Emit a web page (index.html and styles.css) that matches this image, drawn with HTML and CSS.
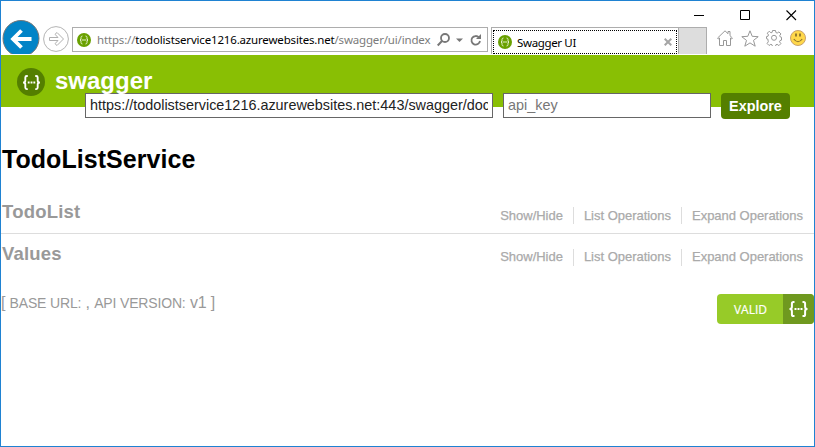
FILE: index.html
```html
<!DOCTYPE html>
<html lang="en">
<head>
<meta charset="utf-8">
<title>Swagger UI</title>
<link rel="stylesheet" href="styles.css">
</head>
<body>
<svg class="defs" width="0" height="0">
  <symbol id="braces" viewBox="0 0 20 16">
    <path d="M6 1H5Q3.400 1 3.400 2.600V6Q3.400 8 1 8Q3.400 8 3.400 10V13.400Q3.400 15 5 15H6M14 1H15Q16.600 1 16.600 2.600V6Q16.600 8 19 8Q16.600 8 16.600 10V13.400Q16.600 15 15 15H14" fill="none" stroke="currentColor" stroke-width="2"/>
    <path d="M6 7h2v2H6zM9 7h2v2H9zM12 7h2v2h-2z" fill="currentColor"/>
  </symbol>
  <symbol id="favicon" viewBox="0 0 14 14">
    <circle cx="7" cy="7" r="7" fill="#69a000"/>
    <path d="M5.500 3Q4 3 4 4.500V6L3 7l1 1v1.500Q4 11 5.500 11M8.500 3Q10 3 10 4.500V6l1 1-1 1v1.500Q10 11 8.500 11M4.500 7h5" fill="none" stroke="#e2efc8" stroke-width="1"/>
  </symbol>
</svg>
<div class="window">
  <div class="titlebar">
    <svg width="11" height="11"><path d="M0 5.500h10" stroke="#000"/></svg>
    <svg width="11" height="11"><path d="M.5 .5h9v9h-9z" fill="none" stroke="#000"/></svg>
    <svg width="11" height="11"><path d="M.5 .5l9.500 9.500M10 .5L.5 10" stroke="#000" stroke-width="1.100"/></svg>
  </div>
  <div class="toolbar">
    <svg class="back" width="38" height="34" viewBox="0 0 38 34">
      <circle cx="19" cy="18.500" r="18" fill="#0284c7" stroke="#777" stroke-width="1"/>
      <path d="M29.500 19H11M19.500 10.500L11 19l8.500 8.500" fill="none" stroke="#fff" stroke-width="3.800"/>
    </svg>
    <svg class="forward" width="26" height="26" viewBox="0 0 26 26">
      <circle cx="13" cy="13" r="12.400" fill="#fff" stroke="#b4b4b4"/>
      <path d="M6.500 11.500H15L12 8.300 14 6.500 20.500 13 14 19.500 12 17.700 15 14.500H6.500z" fill="#fff" stroke="#b0b0b0"/>
    </svg>
    <div class="address">
      <svg width="14" height="14"><use href="#favicon"/></svg>
      <span class="url">https://<b>todolistservice1216.azurewebsites.net</b>/swagger/ui/index</span>
      <svg class="tools" width="46" height="14" viewBox="0 0 46 14">
        <circle cx="8" cy="5" r="4" fill="none" stroke="#777" stroke-width="1.800"/><path d="M5 8L.7 12.500" stroke="#777" stroke-width="2"/>
        <path d="M19 5.500h7L22.500 9z" fill="#777"/>
        <path d="M42 4.500A4.300 4.300 0 1 0 43 8" fill="none" stroke="#777" stroke-width="1.800"/><path d="M44 1v5h-5z" fill="#777"/>
      </svg>
    </div>
    <div class="tab"><div class="focus">
      <svg width="14" height="14"><use href="#favicon"/></svg>
      <span>Swagger UI</span>
      <svg class="close" width="8" height="8"><path d="M.7 .7l6.600 6.600M7.300 .7L.7 7.300" stroke="#a5a5a5" stroke-width="2"/></svg>
    </div></div>
    <div class="newtab"></div>
    <div class="actions">
      <svg width="16" height="16" viewBox="0 0 16 16"><path d="M.6 8L8 .8 11 3.700V1.500h2v4.200L15.400 8l-.8 1L13.500 8v7.500h-4v-5h-3v5h-4V8L1.400 9z" fill="none" stroke="#989898"/></svg>
      <svg width="18" height="17" viewBox="0 0 18 17"><path d="M9 .8l2.200 5.500 6 .4-4.700 3.700 1.700 5.800L9 12.900l-5.200 3.300 1.700-5.800L.8 6.700l6-.4z" fill="none" stroke="#989898"/></svg>
      <svg width="16" height="16" viewBox="0 0 16 16"><path d="M6.500 .5h3l.4 2 1.300.6 1.700-1.200 2 2-1.200 1.700.5 1.300 1.300.4v2.800l-1.500.5-.5 1.200 1.400 1.800-2 2-1.800-1.300-1.200.5-.4 1.700h-3l-.5-1.700-1.200-.5-1.700 1.200-2-2 1.200-1.800L1.800 9 .5 8.700V6.600L2 6.200l.5-1.300L1.300 3.200l2-2L5 2.900l1.200-.6z" fill="none" stroke="#989898"/><circle cx="8" cy="7.800" r="2.500" fill="none" stroke="#989898"/></svg>
      <svg width="16" height="16" viewBox="0 0 16 16"><circle cx="8" cy="8" r="7.500" fill="#ffd84a" stroke="#c9a26d"/><path d="M6 3.500v3M10 3.500v3" stroke="#7c6428" stroke-width="1.600"/><path d="M3.800 9Q8 14.500 12.200 9" fill="none" stroke="#8b702c" stroke-width="1.200"/></svg>
    </div>
  </div>
  <header class="header">
    <div class="logo"><svg width="19" height="15"><use href="#braces"/></svg></div>
    <div class="brand">
      <div class="name">swagger</div>
      <form class="api-form">
        <div class="field base"><span>https://todolistservice1216.azurewebsites.net:443/swagger/doc</span></div>
        <div class="field key"><span>api_key</span></div>
        <div class="explore">Explore</div>
      </form>
    </div>
  </header>
  <main>
    <h1>TodoListService</h1>
    <section class="resource first">
      <h2>TodoList</h2>
      <ul><li>Show/Hide</li><li>List Operations</li><li>Expand Operations</li></ul>
    </section>
    <section class="resource">
      <h2>Values</h2>
      <ul><li>Show/Hide</li><li>List Operations</li><li>Expand Operations</li></ul>
    </section>
    <footer>
      <div class="info">[ <small>BASE URL:</small> , <small>API VERSION:</small> v1 ]</div>
      <div class="badge"><span>VALID</span><i><svg width="21" height="16"><use href="#braces"/></svg></i></div>
    </footer>
  </main>
</div>
</body>
</html>
```
FILE: styles.css
```css
* { box-sizing: border-box; }
body { margin: 0; background: #fff; font-family: "Liberation Sans", Arial, sans-serif; }
svg { display: block; flex: none; }
.defs { position: absolute; }
.window { height: 447px; border: 1px solid #1f82d2; overflow: hidden; white-space: nowrap; }

.titlebar { height: 19px; display: flex; justify-content: flex-end; gap: 35px; padding: 9px 17px 0 0; }
.titlebar svg { overflow: visible; }
.toolbar { height: 35px; display: flex; align-items: flex-start; font-family: "Noto Sans", sans-serif; font-size: 12px; }
.back { margin-left: 1px; }
.forward { margin: 6px 0 0 3px; }
.address { width: 416px; height: 25px; margin: 7px 0 0 3px; border: 1px solid #adadad; display: flex; align-items: center; padding: 0 4px; color: #7b7b7b; }
.address .url { margin-left: 6px; width: 334px; font-size: 11.5px; letter-spacing: -0.17px; }
.address b { font-weight: 400; color: #000; }
.tools { margin-left: 6px; }
.tab { width: 188px; height: 27px; margin: 7px 0 0 3px; border: 1px solid #adadad; border-bottom: 0; padding: 2px 1px 0; color: #000; }
.focus { height: 24px; border: 1px dotted #000; display: flex; align-items: center; padding: 0 4px; }
.focus span { margin-left: 5px; font-size: 11.5px; letter-spacing: -0.35px; }
.close { margin-left: auto; }
.newtab { width: 28px; height: 27px; margin-top: 7px; border: 1px solid #adadad; border-width: 1px 1px 0 0; background: #ddd; }
.actions { display: flex; gap: 7.6px; margin: 10px 0 0 10px; }

.header { height: 52px; background: #89bf04; display: flex; align-items: flex-start; }
.logo { flex: none; width: 28px; height: 28px; margin: 13px 0 0 16px; border-radius: 50%; background: #547f00; color: #fff; display: flex; align-items: center; justify-content: center; }
.brand { padding: 12px 0 0 10px; }
.name { position: relative; z-index: 1; height: 26px; line-height: 28px; font-size: 24px; font-weight: 700; color: #fff; }
.api-form { display: flex; gap: 10px; margin-left: 30px; }
.field { height: 25px; border: 1px solid #666; background: #fff; padding: 0 4px; font-size: 14.4px; line-height: 23px; color: #222; }
.field span { display: block; overflow: hidden; }
.base { width: 408px; }
.key { width: 208px; color: #777; }
.explore { width: 69px; height: 26px; border-radius: 4px; background: #547f00; color: #fff; font-size: 14.4px; font-weight: 700; line-height: 26px; text-align: center; }

h1 { margin: 37px 0 0 1px; font-size: 25px; line-height: 30px; letter-spacing: 0.05px; color: #000; }
.resource { height: 41px; display: flex; justify-content: space-between; padding: 9px 11px 0 1px; color: #999; }
.resource.first { height: 44px; margin-top: 16px; border-bottom: 1px solid #ddd; padding-top: 11px; }
h2 { margin: 0; font-size: 18.5px; line-height: 21px; letter-spacing: 0.2px; }
.resource ul { display: flex; list-style: none; margin: 6px 0 0; padding: 0; font-size: 13px; line-height: 15px; height: 17px; color: #aaa; }
.resource.first ul { line-height: 17px; }
.resource li { height: 17px; padding: 0 10px; border-right: 1px solid #ddd; letter-spacing: -0.02px; -webkit-text-stroke: .25px #aaa; }
.resource li:last-child { padding-right: 0; border: 0; }
footer { display: flex; justify-content: space-between; align-items: flex-start; margin-top: 19px; color: #999; }
.info { font-size: 16px; line-height: 18px; letter-spacing: -0.16px; }
.info small { font-size: 14px; }
.badge { width: 97px; height: 30px; border-radius: 4px; overflow: hidden; display: flex; background: #97cb28; color: #fff; font-family: "Open Sans", sans-serif; font-size: 12px; line-height: 31px; text-align: center; -webkit-text-stroke: .2px #fff; }
.badge span { width: 66px; padding-left: 1px; }
.badge i { width: 31px; background: #6f991f; display: flex; align-items: center; justify-content: center; }
```
